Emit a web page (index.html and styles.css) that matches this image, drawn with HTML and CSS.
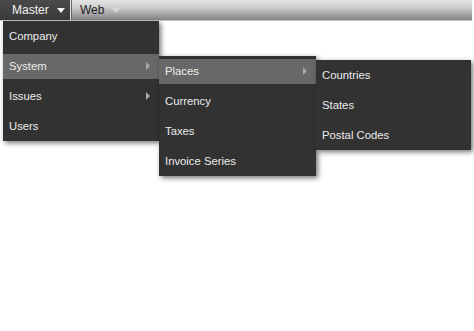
FILE: index.html
```html
<!DOCTYPE html>
<html>
<head>
<meta charset="utf-8">
<link rel="stylesheet" href="styles.css">
</head>
<body>
<nav class="bar">
  <ul class="menubar">
    <li class="top active">
      <span class="top-label">Master</span><span class="caret"></span>
      <ul class="menu menu-main">
        <li class="item"><span class="row">Company</span></li>
        <li class="item has-sub open"><span class="row">System<span class="arrow"></span></span>
          <ul class="menu menu-sub">
            <li class="item has-sub open"><span class="row">Places<span class="arrow"></span></span>
              <ul class="menu menu-sub2">
                <li class="item"><span class="row">Countries</span></li>
                <li class="item"><span class="row">States</span></li>
                <li class="item"><span class="row">Postal Codes</span></li>
              </ul>
            </li>
            <li class="item"><span class="row">Currency</span></li>
            <li class="item"><span class="row">Taxes</span></li>
            <li class="item"><span class="row">Invoice Series</span></li>
          </ul>
        </li>
        <li class="item has-sub"><span class="row">Issues<span class="arrow"></span></span></li>
        <li class="item"><span class="row">Users</span></li>
      </ul>
    </li>
    <li class="top">
      <span class="top-label">Web</span><span class="caret caret-light"></span>
    </li>
  </ul>
</nav>
</body>
</html>
```

FILE: styles.css
```css
* { box-sizing: border-box; }
html, body { margin: 0; padding: 0; background: #fff; }
body {
  font-family: "Liberation Sans", Arial, sans-serif;
  font-size: 11px;
  width: 474px;
  height: 331px;
  overflow: hidden;
}
ul { list-style: none; margin: 0; padding: 0; }

.bar {
  width: 472px;
  height: 21px;
  background: linear-gradient(to bottom, #e4e4e4 0%, #cfcfcf 35%, #9a9a9a 80%, #858585 100%);
  border-bottom: 1px solid #c8c8c8;
}
.menubar { display: flex; height: 20px; }
.top {
  position: relative;
  display: flex;
  align-items: center;
  height: 20px;
  color: #1e1e1e;
  font-size: 12px;
}
.top.active {
  width: 71px;
  padding-left: 12px;
  color: #f2f2f2;
  background: linear-gradient(to bottom, #4a4a4a 0%, #3a3a3a 100%);
  border-right: 1px solid #e0e0e0;
}
.top:not(.active) {
  padding-left: 8px;
  width: 60px;
  border-left: 1px solid #6a6a6a;
}
.caret {
  width: 0; height: 0;
  margin-left: 8px;
  margin-top: 1px;
  border-left: 4px solid transparent;
  border-right: 4px solid transparent;
  border-top: 5px solid #f4f4f4;
}
.caret-light { border-top-color: #d8d8d8; margin-left: 8px; }

.menu {
  position: absolute;
  background: #323232;
  box-shadow: 2px 2px 5px rgba(0,0,0,0.55);
  font-size: 11.3px;
  color: #ececec;
}
.menu-main { top: 21px; left: 3px; width: 156px; }
.menu-sub { top: 5px; left: 100%; width: 157px; }
.menu-sub2 { top: 4px; left: 100%; width: 155px; }

.item {
  position: relative;
  height: 30px;
  display: flex;
  align-items: center;
}
.row {
  flex: 1;
  height: 25px;
  display: flex;
  align-items: center;
  justify-content: space-between;
  padding: 0 9px 0 6px;
}
.item.open > .row { background: #686868; }
.arrow {
  width: 0; height: 0;
  border-top: 4px solid transparent;
  border-bottom: 4px solid transparent;
  border-left: 4px solid #a8a8a8;
}
```
